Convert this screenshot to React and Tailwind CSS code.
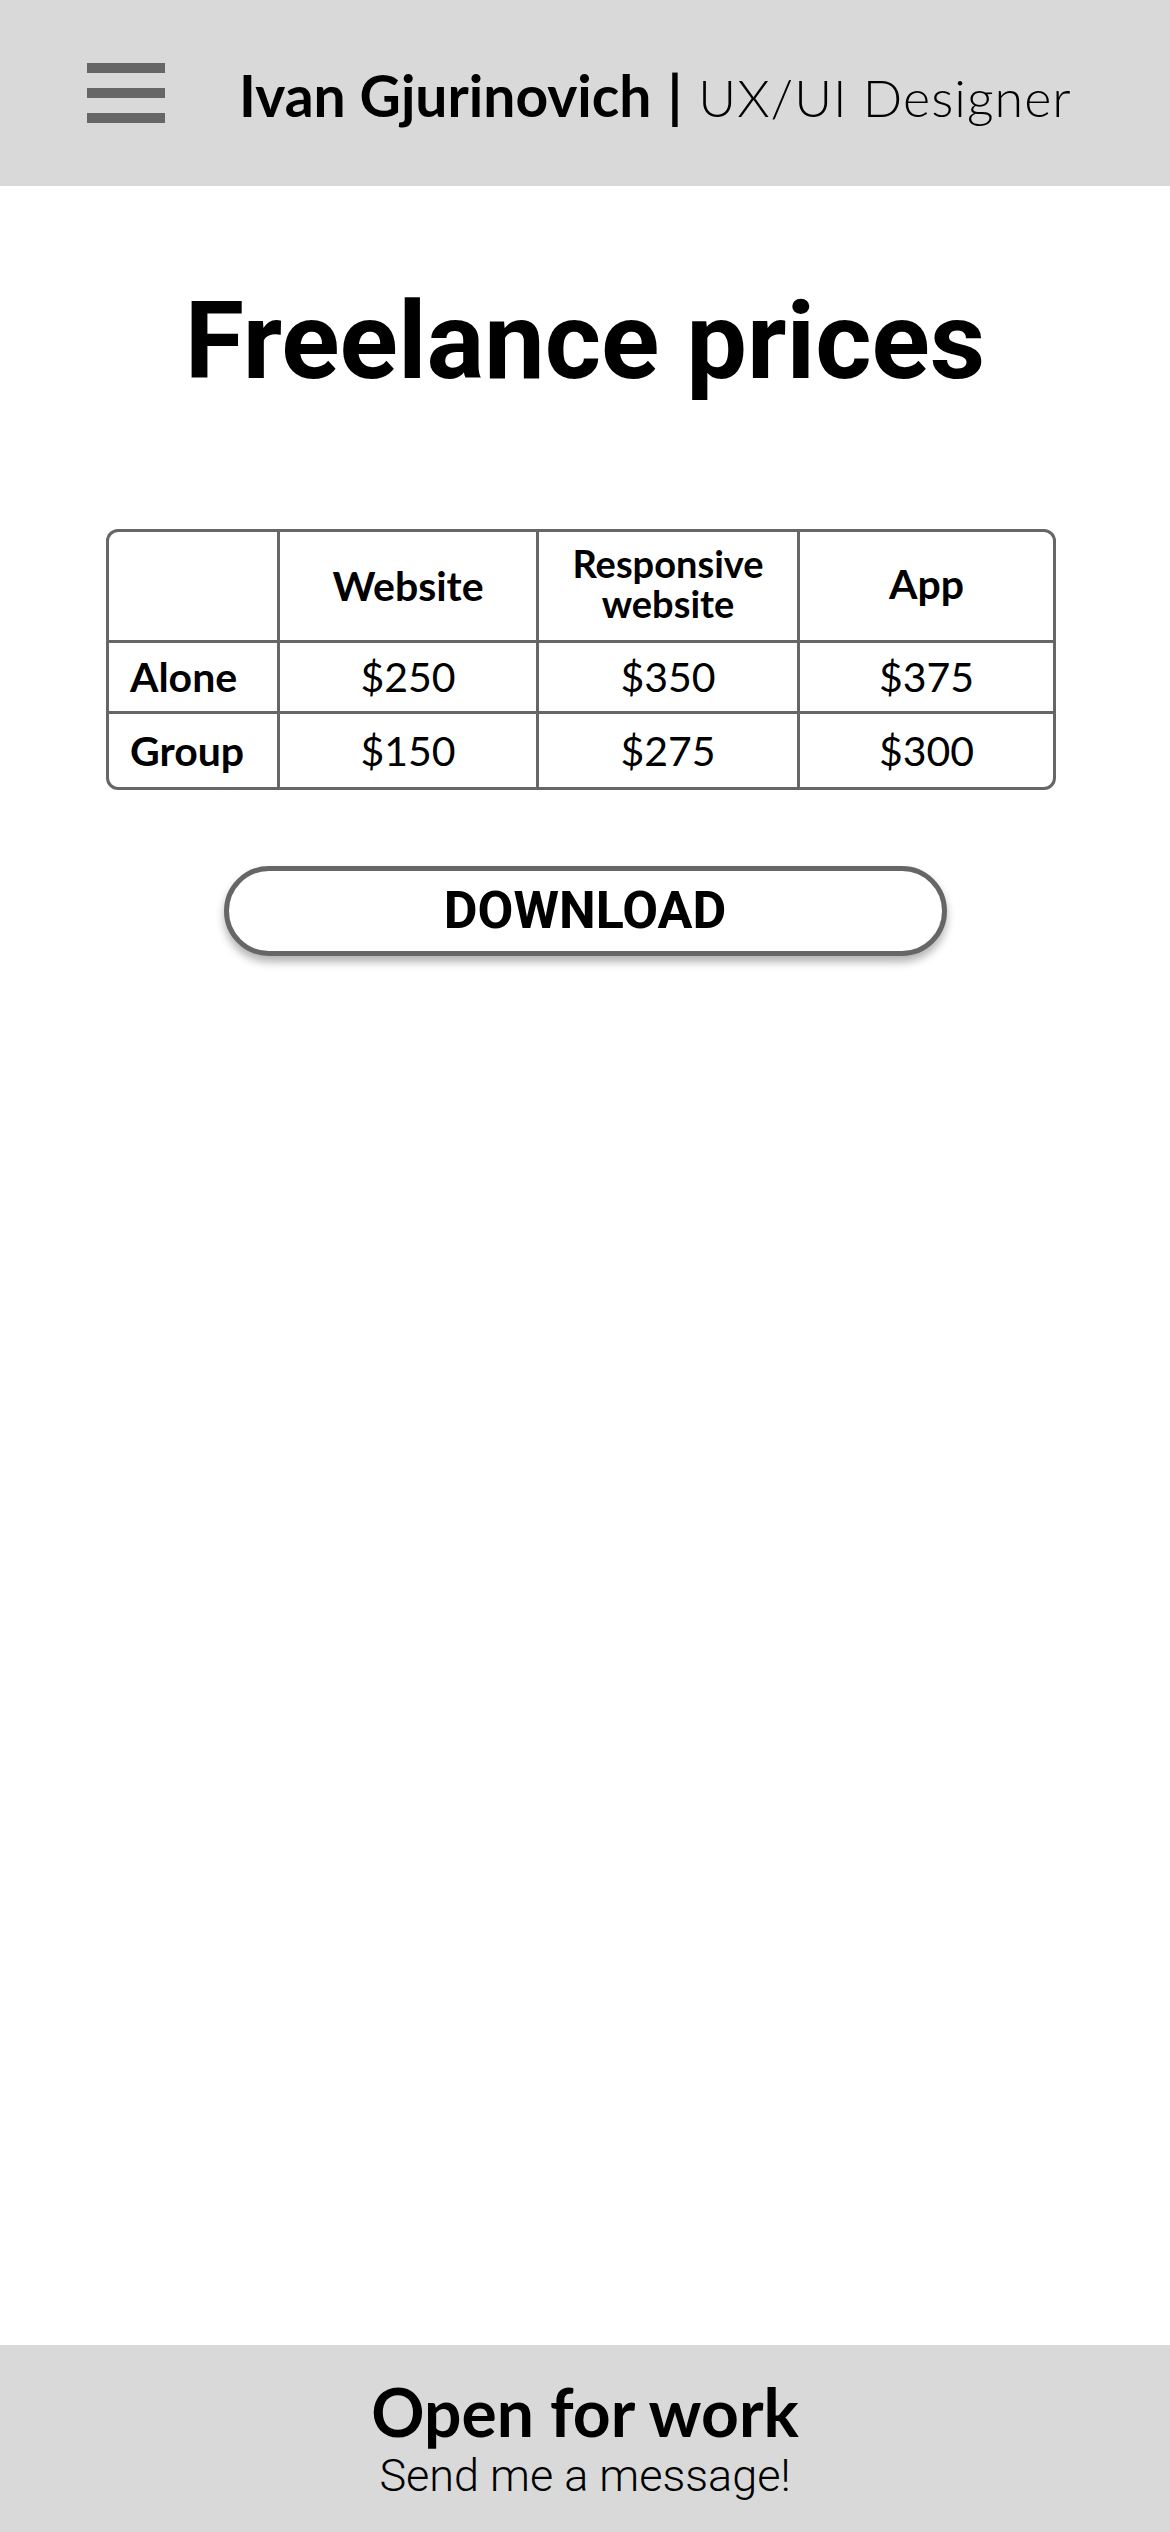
import React from "react";

const geo = { fontFamily: "Lato, 'Open Sans', sans-serif" };
const rob = { fontFamily: "Roboto, 'Liberation Sans', sans-serif" };

const prices = [
  { label: "Alone", values: ["$250", "$350", "$375"] },
  { label: "Group", values: ["$150", "$275", "$300"] },
];

const Header = () => (
  <header className="h-[186px] bg-[#d9d9d9] flex items-center pl-[87px] shrink-0">
    {/* hamburger */}
    <div className="flex flex-col gap-[15px] w-[78px]">
      <span className="block h-[10px] bg-[#666666]" />
      <span className="block h-[10px] bg-[#666666]" />
      <span className="block h-[10px] bg-[#666666]" />
    </div>
    <div className="ml-[74px] mt-[4px] text-black leading-none whitespace-nowrap flex items-baseline" style={geo}>
      <span className="font-bold text-[57px]">Ivan Gjurinovich</span>
      <span className="font-bold text-[57px] mx-[16px]">|</span>
      <span className="font-light text-[52px] tracking-[0.02em]">UX/UI Designer</span>
    </div>
  </header>
);

const PriceTable = () => (
  <div className="w-[950px] border-[3px] border-[#666666] rounded-[12px] overflow-hidden" style={geo}>
    <div className="grid grid-cols-[168px_259px_261px_1fr] grid-rows-[108px_71px_76px] text-black">
      <div />
      <div className="border-l-[3px] border-[#666666] flex items-center justify-center text-[41px] font-bold">Website</div>
      <div className="border-l-[3px] border-[#666666] flex flex-col items-center justify-center text-[38px] font-bold leading-[40px] pb-[6px]">
        <span>Responsive</span>
        <span>website</span>
      </div>
      <div className="border-l-[3px] border-[#666666] flex items-center justify-center text-[41px] font-bold pb-[4px]">App</div>
      {prices.map((row) => (
        <React.Fragment key={row.label}>
          <div className="border-t-[3px] border-[#666666] flex items-center pl-[21px] text-[41px] font-bold">{row.label}</div>
          {row.values.map((v) => (
            <div key={v} className="border-t-[3px] border-l-[3px] border-[#666666] flex items-center justify-center text-[41px]">
              {v}
            </div>
          ))}
        </React.Fragment>
      ))}
    </div>
  </div>
);

export default function App() {
  return (
    <div className="min-h-[2532px] flex flex-col bg-white">
      <Header />
      <main className="flex-1 flex flex-col items-center">
        <h1 className="mt-[101px] text-[108px] leading-none font-bold text-black" style={rob}>
          Freelance prices
        </h1>
        <div className="mt-[134px] mr-[8px]">
          <PriceTable />
        </div>
        <button
          className="mt-[76px] w-[723px] h-[90px] border-[5px] border-[#666666] rounded-full bg-white shadow-[0_6px_8px_rgba(0,0,0,0.3)] text-[52px] font-bold text-black flex items-center justify-center"
          style={rob}
        >
          DOWNLOAD
        </button>
      </main>
      <footer className="h-[187px] bg-[#d9d9d9] flex flex-col items-center justify-center shrink-0">
        <div className="text-[66px] font-bold leading-none text-black" style={geo}>Open for work</div>
        <div className="text-[45px] font-light leading-none text-black mt-[8px]" style={rob}>Send me a message!</div>
      </footer>
    </div>
  );
}
